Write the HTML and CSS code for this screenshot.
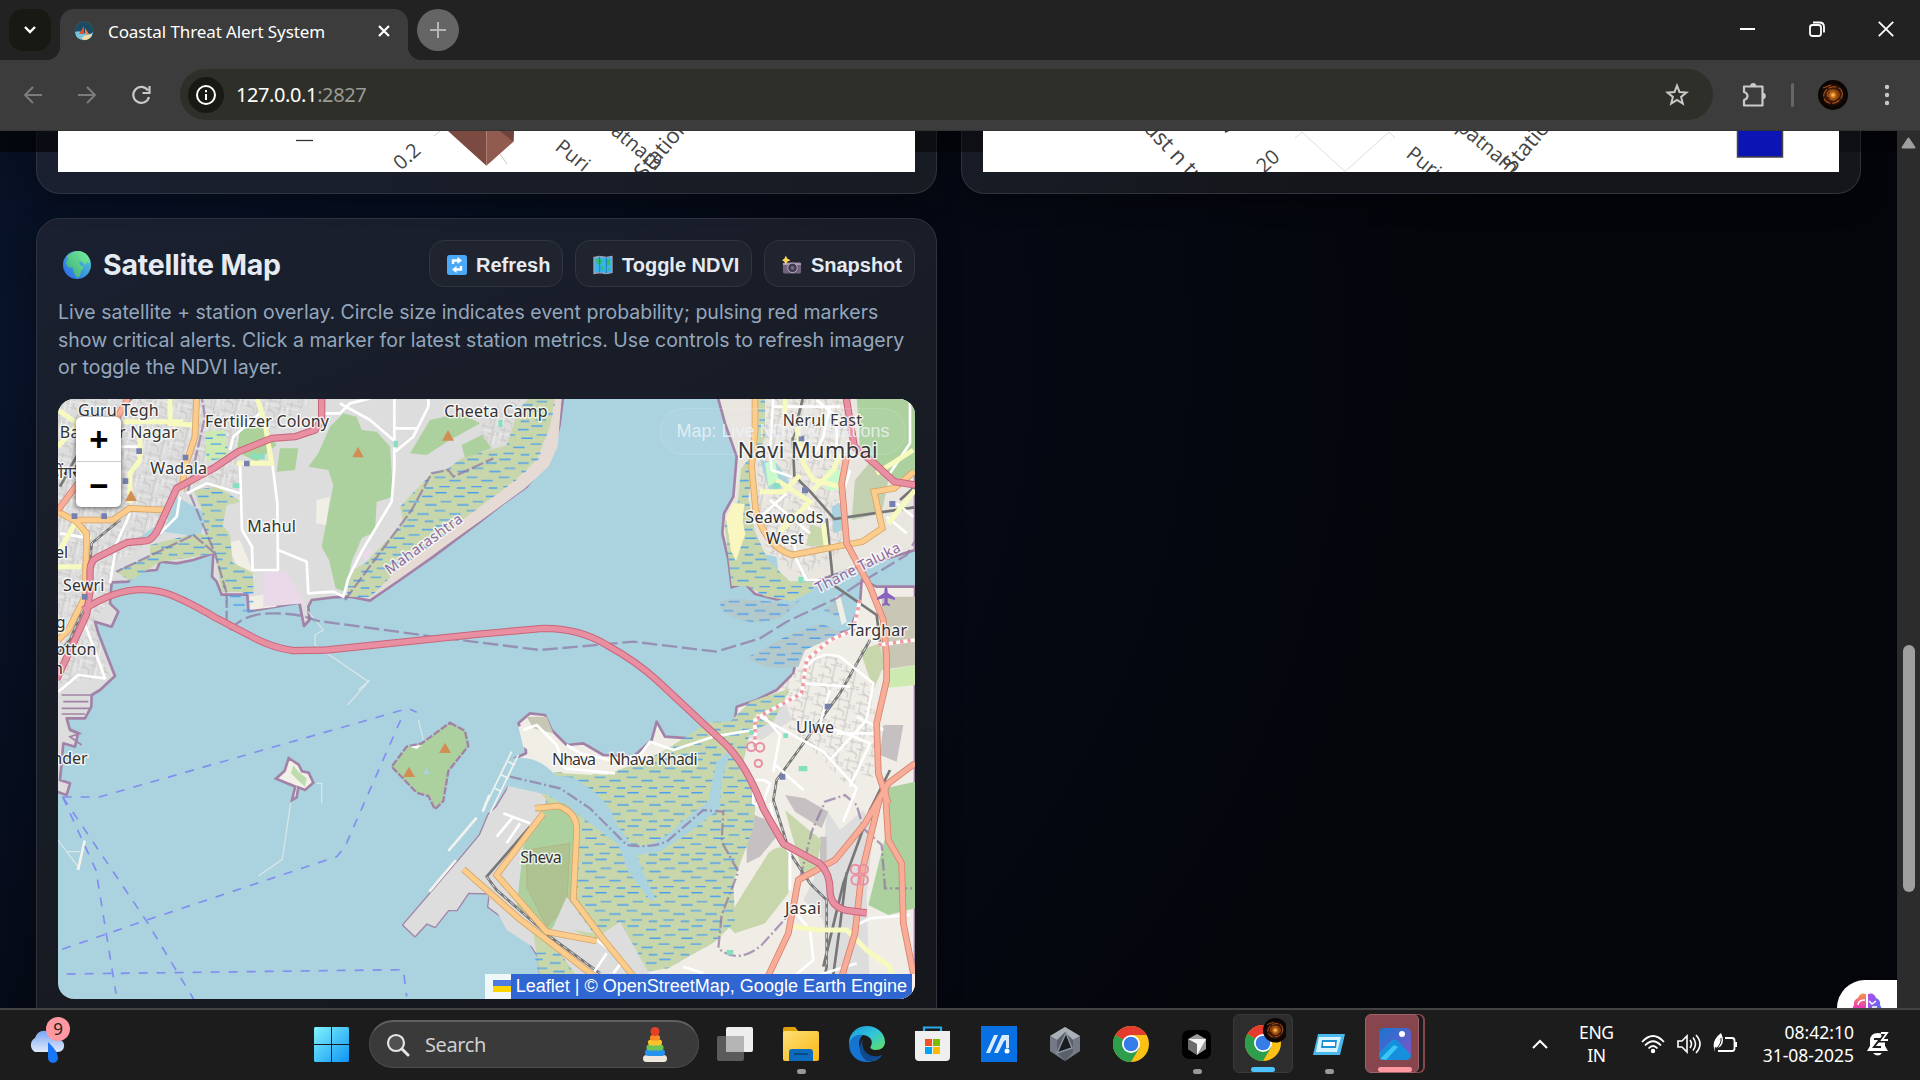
FILE: index.html
```html
<!DOCTYPE html>
<html lang="en">
<head>
<meta charset="utf-8">
<title>Coastal Threat Alert System</title>
<link rel="stylesheet" href="styles.css">
</head>
<body>
<div class="screen">
  <div class="tabstrip">
    <div class="tabsearch"><svg width="14" height="10" viewBox="0 0 14 10"><path d="M2 2l5 5 5-5" fill="none" stroke="#fff" stroke-width="2.4"/></svg></div>
    <div class="tab">
      <svg class="favicon" width="20" height="20" viewBox="0 0 20 20"><circle cx="10" cy="10" r="9.2" fill="#1c4a63" stroke="#2b5a66"/><path d="M1 11q4-2 9 1t9-1q-1 8-9 8t-9-8" fill="#79c3da"/><path d="M8 18q0-3 5-4l5-1q-2 6-8 6z" fill="#f3d9a6"/><path d="M10 5v8H5z" fill="#e3502b"/><path d="M11 7l4 6h-4z" fill="#f08040"/></svg>
      <span class="tab-title">Coastal Threat Alert System</span>
      <svg width="14" height="14" viewBox="0 0 14 14"><path d="M2 2l10 10M12 2L2 12" stroke="#fff" stroke-width="2.2"/></svg>
    </div>
    <div class="newtab"><svg width="16" height="16" viewBox="0 0 16 16"><path d="M8 0v16M0 8h16" stroke="#b5b5b5" stroke-width="2"/></svg></div>
    <div class="winctl">
      <svg width="16" height="16" viewBox="0 0 16 16"><path d="M0 8h15" stroke="#fff" stroke-width="2"/></svg>
      <svg width="16" height="16" viewBox="0 0 16 16"><rect x="1" y="4" width="11" height="11" rx="2.5" fill="none" stroke="#fff" stroke-width="1.8"/><path d="M4 1.5h6.500q4.500 0 4.500 4.500v5.500" fill="none" stroke="#fff" stroke-width="1.800"/></svg>
      <svg width="16" height="16" viewBox="0 0 16 16"><path d="M.8.8l14.400 14.400M15.200.8L.8 15.200" stroke="#fff" stroke-width="1.800"/></svg>
    </div>
  </div>

  <div class="toolbar">
    <div class="nav">
      <svg width="20" height="20" viewBox="0 0 20 20"><path d="M19 10H2M10 2L2 10l8 8" fill="none" stroke="#7b7b7b" stroke-width="2"/></svg>
      <svg width="20" height="20" viewBox="0 0 20 20"><path d="M1 10h17M10 2l8 8-8 8" fill="none" stroke="#7b7b7b" stroke-width="2"/></svg>
      <svg width="20" height="20" viewBox="0 0 20 20"><path d="M17 5.500A8 8 0 1 0 18 12" fill="none" stroke="#c9c9c9" stroke-width="2.200"/><path d="M18.500 1v7h-7" fill="none" stroke="#c9c9c9" stroke-width="2.200"/></svg>
    </div>
    <div class="omnibox">
      <span class="siteinfo"><svg width="22" height="22" viewBox="0 0 22 22"><circle cx="11" cy="11" r="9" fill="none" stroke="#fff" stroke-width="2"/><path d="M11 10v6M11 6v2.200" stroke="#fff" stroke-width="2"/></svg></span>
      <span class="url">127.0.0.1<i>:2827</i></span>
      <svg width="24" height="24" viewBox="0 0 24 24"><path d="M12 2.600l2.500 6.400 6.900.5-5.300 4.400 1.700 6.700-5.800-3.700-5.800 3.700 1.700-6.700L2.600 9.500 9.500 9z" fill="none" stroke="#c9c9c9" stroke-width="2"/></svg>
    </div>
    <svg class="ext" width="26" height="26" viewBox="0 0 26 26"><path d="M3 4.500h18.500v19H3v-5.500q3.500-1 3.500-4T3 10z" fill="none" stroke="#c9c9c9" stroke-width="2.200" stroke-linejoin="round"/><path d="M9 4.500a3.200 3.500 0 0 1 6.400 0zM21.500 10.800a3.300 3.200 0 0 1 0 6.400z" fill="#c9c9c9"/></svg>
    <span class="sep"></span>
    <svg class="avatar" width="30" height="30" viewBox="0 0 30 30"><use href="#galaxy"/></svg>
    <svg width="6" height="24" viewBox="0 0 6 24"><g fill="#c9c9c9"><circle cx="3" cy="4" r="2.200"/><circle cx="3" cy="12" r="2.200"/><circle cx="3" cy="20" r="2.200"/></g></svg>
  </div>

  <div class="viewport">
    <div class="page">
      <div class="charts">
        <section class="card chart-card">
          <svg class="chart" viewBox="58 131 857 41" width="857" height="41">
            <rect x="58" y="131" width="857" height="41" fill="#fff"/>
            <path d="M296 140.500h17" stroke="#333" stroke-width="1.300"/>
            <path d="M434 136l6-5M498 151l9 13" stroke="#ccc"/>
            <path d="M448 131l38.400 34.700V131z" fill="#7b4b42"/><path d="M486.400 165.700l27-24L514 131h-27.600z" fill="#925b50"/><path d="M500 131h14l-.6 10.700z" fill="#6d433b"/>
            <g class="plot-label"><text transform="translate(401 171) rotate(-42)">0.2</text><text transform="translate(554 149) rotate(39)">Puri</text><text transform="translate(610 133) rotate(40)">atnam</text><text class="axis" transform="translate(644 181) rotate(-50)">Station</text></g>
          </svg>
        </section>
        <section class="card chart-card">
          <svg class="chart" viewBox="983 131 856 41" width="856" height="41">
            <rect x="983" y="131" width="857" height="41" fill="#fff"/>
            <path d="M1295 138l7-6 43 39.500 44-39.500 6 6" fill="none" stroke="#ddd"/>
            <path d="M1225 132l4-2" stroke="#444" stroke-width="2"/>
            <g class="plot-label"><text class="axis" transform="translate(1139 125) rotate(47)">Just n tr</text><text transform="translate(1264 174) rotate(-42)">20</text><text transform="translate(1405 156) rotate(39)">Puri</text><text transform="translate(1456 129) rotate(40)">patnam</text><text class="axis" transform="translate(1513 173) rotate(-50)">Station</text></g>
            <rect x="1737.500" y="120" width="45" height="37" fill="#0c14b4" stroke="#444" stroke-width="1.500"/>
          </svg>
        </section>
      </div>

      <section class="card map-card">
        <div class="card-head">
          <h2><svg width="28" height="28" viewBox="0 0 28 28"><circle cx="14" cy="14" r="14" fill="url(#sea)"/><path d="M4 6q5-6 12-6 7 1 10 7l1 6-3-2-2 3-3-3-3-1 1 4 4 2-3 4-1 5-3 2-3-5-1-5-5-1-2-4 2-4z" fill="url(#land)"/></svg>Satellite Map</h2>
          <div class="actions">
            <button><svg width="20" height="20" viewBox="0 0 20 20"><rect width="20" height="20" rx="2.500" fill="#4ba8f7"/><path d="M6 9V5.500h5M14 11v3.500H9" fill="none" stroke="#fff" stroke-width="2.400"/><path d="M10.500 2l4.500 3.500-4.500 3.500zM9.500 11L5 14.500 9.500 18z" fill="#fff"/></svg><span>Refresh</span></button>
            <button><svg width="20" height="20" viewBox="0 0 21 20"><path d="M1 2l6-1 7 1 6-1v17l-6 1-7-1-6 1z" fill="#38b5e8" stroke="#aaa2bd" stroke-width="1.200"/><path d="M3 4l4-1 3 3-2 3-3 1zM8 11l3 1-2 5zM13 5l5-1v5l-3 2zM15 13l3 1-1 2z" fill="#35bc62"/><path d="M7 1v17M14 2v17" stroke="#197eb8"/></svg><span>Toggle NDVI</span></button>
            <button><svg width="20" height="20" viewBox="0 0 21 20"><rect x="1" y="7" width="19" height="12" rx="2" fill="#72637e"/><path d="M1 9h19" stroke="#aa9db3" stroke-width="2"/><circle cx="11" cy="13" r="5" fill="#43394d" stroke="#bdafc4"/><circle cx="11" cy="13" r="2" fill="#756d8d"/><path d="M4 0l1.400 3.200L9 5 5.400 6.500 4 10 2.600 6.500 0 5l2.600-1.800z" fill="#ffd55c"/></svg><span>Snapshot</span></button>
          </div>
        </div>
        <p class="desc">Live satellite + station overlay. Circle size indicates event probability; pulsing red markers show critical alerts. Click a marker for latest station metrics. Use controls to refresh imagery or toggle the NDVI layer.</p>
        <div class="map">
          <svg class="tiles" viewBox="24 27 2571 1800" width="857" height="600">
            <defs>
              <pattern id="wet" width="96" height="100" patternUnits="userSpaceOnUse"><path d="M4 8h34M60 19h32M20 35h32M70 45h26M0 45h8M2 62h32M46 72h34M16 90h32M68 94h26" stroke="#4b9ff0" stroke-width="4"/></pattern>
              <pattern id="streets" width="64" height="58" patternUnits="userSpaceOnUse" patternTransform="rotate(12)"><path d="M0 9h40l8 12h16M14 0v34l20 10v14M44 0v58M0 40h26M30 28h34" fill="none" stroke="#c9c7c5" stroke-width="3"/><path d="M0 20h44M54 20v38M5 20v30" stroke="#efeeed" stroke-width="3" fill="none"/></pattern>
            </defs>
            <rect width="2700" height="1900" fill="#abd3df"/>
            <!-- land -->
            <g stroke="#a283a7" stroke-width="8" stroke-linejoin="round" fill="#dddddd">
              <path d="M0 0H1542L1528 110 1505 180 1470 240 1430 290 1360 340 1290 395 1150 500 1050 570 960 632 900 620 850 622 785 630 775 650 778 690 762 708 748 638 595 664 592 614 515 614 500 575 486 560 490 490 430 510 380 520 330 515 320 540 260 545 235 575 185 577 180 640 205 665 185 710 135 695 145 730 195 858 150 900 125 915 124 950 105 985 50 985 60 1020 84 1030 75 1070 40 1060 30 1170 60 1180 50 1215 20 1205H0z"/>
              <path d="M2003 20L2025 100 2060 200 2050 320 2022 370 2017 430 2035 510 2045 592 2085 580 2115 612 2180 628 2240 615 2280 580 2380 545 2595 480V20z" fill="#e9e6e0"/>
              <path d="M2595 590L2480 590 2435 570 2430 640 2400 720 2330 740 2285 755 2240 800 2230 850 2180 900 2120 930 2060 950 2055 990 2000 1030 1920 1045 1845 1040 1820 995 1805 1050 1750 1100 1660 1095 1600 1060 1550 1065 1505 1020 1485 975 1440 970 1405 1000 1425 1045 1428 1090 1385 1110 1395 1160 1340 1250 1315 1275 1290 1335 1240 1395 1060 1605 1095 1638 1130 1600 1155 1610 1195 1560 1220 1560 1255 1508 1320 1510 1315 1550 1420 1628 1465 1700 1480 1827H2595z" fill="#f0ede6"/>
            </g>
            <!-- Mumbai side -->
            <path d="M0 20H800L560 200 570 320 440 280 400 320 330 440 190 520 180 570 170 640 130 700 180 860 30 880z" fill="url(#streets)"/>
            <path d="M1300 60l110-30-40 130-80 20z" fill="url(#streets)"/>
            <path d="M570 120l60-15 50 60-60 50-60-30zM690 175h55l-10 65-55 5z" fill="#acd19b"/>
            <path d="M465 125l60-5 10 80-65 15z" fill="#cdebb0"/>
            <path d="M840 110l40-40 40 10 15 40 45 5 40 45 10 150-50 15-5 90-40 20-30 70-20 90-28-10-20-85-22-40 35-185-15-45-60-10 30-40z" fill="#acd19f"/>
            <path d="M1080 190l60-100 90-20 60 30-90 50-70 45zM1235 165l60-30 30 40-80 30z" fill="#acd19f"/>
            <path d="M800 330l40-10-12 85-30-5zM530 460l40-10 45 110-30 20zM600 620l60-10 20 40-80 10z" fill="#f1eee6"/>
            <path d="M640 545h70l55 95-125 10zM930 490l40-20-20 45z" fill="#ead9e8"/>
            <path d="M380 320l90 50-20 70-110-15zM270 440l60-40-40 60z" fill="#abd3df"/>
            <path d="M890 620L900 545 945 520 1060 400 1050 350 1145 250 1195 235 1235 205 1370 165 1405 60 1440 20H1520L1500 110 1465 210 1400 270 1290 350 1200 425 1050 535 960 622z" fill="#c8d7ab"/>
            <path d="M1535 20h-20l-15 90-40 100-70 65-100 75-240 180-85 90 90-60 240-170 130-95 70-65 28-60z" fill="#e5dad4"/>
            <path d="M430 300l70-10 75 45-45 10-12 60 22 28 8 85 62 30v58h-95l-20-116-60 10-105 15-90 58-45-30 105-45v-33l140-35 30 5-15-75z" fill="#c8d7ab"/>
            <g fill="url(#wet)"><path d="M890 620L900 545 945 520 1060 400 1050 350 1145 250 1195 235 1235 205 1370 165 1405 60 1440 20H1520L1500 110 1465 210 1400 270 1290 350 1200 425 1050 535 960 622z"/><path d="M430 300l70-10 75 45-45 10-12 60 22 28 8 85 62 30v118h-75l-40-176-60 10-105 15-90 58-45-30 105-45v-33l140-35 30 5-15-75zM465 125l60-5 10 80-65 15z"/></g>
            <!-- Navi Mumbai -->
            <path d="M2120 27H2400L2390 210 2360 340 2380 480 2250 560 2150 480 2125 370z" fill="url(#streets)"/>
            <path d="M2420 20h180v230l-70 20-100-90z" fill="#acd19f"/><path d="M2415 270l50-60 50 60-20 100-90 20z" fill="#c3d0b0"/>
            <path d="M2130 210l50 10 40 60-60 30zM2130 490l50 10 10 100-40-20zM2345 350l35-20v90l-30 10z" fill="#abd3df"/><path d="M2145 220l30-10 10 60-30 20zM2330 240h45v60h-50z" fill="#c8facc"/>
            <g fill="#c8d7ab"><path d="M2008 27h105l-10 170-30 40-10 100-40 60 22 190 50 2 50 30 80 15 60-30 15-30-80 0-65-60-40-90-20-100 20-120 30-60V27z"/><path d="M2280 405l40 10 10 60-60-10z"/></g>
            <path d="M2008 27h105l-10 170-30 40-10 100-40 60 22 190 50 2 50 30 80 15 60-30 15-30-80 0-65-60-40-90-20-100 20-120 30-60V27z" fill="url(#wet)"/>
            <path d="M2028 385l20-45 35 2-5 50 8 40-28 80-15-30z" fill="#f9f6c0"/>
            <path d="M2010 640q10-20 85-10 60 0 130 15l30-20-60 60q-80 20-120 5-60-15-65-50zM2095 800l130-70 90-30 60 30-110 50-20 50q-110 15-150-30zM2320 660l40-30 20 60z" fill="#b4c9cc"/><path d="M2010 640q10-20 85-10 60 0 130 15l30-20-60 60q-80 20-120 5-60-15-65-50zM2095 800l130-70 90-30 60 30-110 50-20 50q-110 15-150-30zM2320 660l40-30 20 60z" fill="url(#wet)"/>
            <!-- Ulwe and Jasai -->
            <path d="M2260 820l60-50 130 100 30 110-10 180-80 30-60-70-140-130-40-50z" fill="url(#streets)"/>
            <path d="M2495 620h100v205l-100 15z" fill="#c8c6b4"/><path d="M2515 840l80-15v60l-90 10z" fill="#cdebb0"/><path d="M2430 780l60-20 10 70-30 70z" fill="#c8d7ab"/>
            <path d="M2355 620l15-5 20 80-15 10z" fill="#f1eee6"/>
            <path d="M2330 1260l40 60 70-60 30 60-20 200 10 300h-120l-20-230-60-60 60-120zM2085 970l120-40 20 60-90 60-50-10z" fill="#dddddd"/>
            <path d="M2500 1005h60l-20 110-50-20zM2205 1215l60 10 70 40-20 50-80-50zM2090 1265l60 25 30 50-50 60-40 20zM2310 1340h20v90h-20z" fill="#c5c1c2"/>
            <path d="M2505 1195l90-20v380l-80 20-60-30 50-200z" fill="#acd19f"/>
            <path d="M2205 1260l60 50 50 40-20 110-40-20zM2155 1390q30-30 60-10v130l-70 90-90 30-30-30 60-100z" fill="#c8d7ab"/>
            <path d="M1395 1160L1340 1250 1315 1275 1290 1335 1240 1395 1060 1605 1095 1638 1130 1600 1155 1610 1195 1560 1220 1560 1255 1508 1320 1510 1315 1550 1420 1628 1465 1700 1650 1700 1640 1500 1560 1300 1500 1180z" fill="#dddddd"/>
            <path d="M1390 1120l110 60 20 90-100 160v130l90 70 160 120-40 40-260-170-70-130 30-120z" fill="#dddddd"/>
            <path d="M1500 1220l120 30 120 100 60-70-10 80-50 60 60 70-70 20-60-60-90-120-100-60z" fill="#abd3df"/>
            <path d="M1540 1145l130 10 160-65 150-95 60 0 60-60 120-40-50 100-70 30-20 90 40 80-10 120-60 160 5 120-60 60-140 80-190 30-80-60-70-100-30-100 20-200-20-80-50-70z" fill="#c8d7ab"/><path d="M1540 1145l130 10 160-65 150-95 60 0 60-60 120-40-50 100-70 30-20 90 40 80-10 120-60 160 5 120-60 60-140 80-190 30-80-60-70-100-30-100 20-200-20-80-50-70z" fill="url(#wet)"/>
            <path d="M1450 1630l110 0 180 197h-260z" fill="#c8d7ab"/><path d="M1450 1680l110 0 180 147h-260z" fill="url(#wet)"/><path d="M1430 1550l200 100 80-55 130 232h-210z" fill="#ddd"/>
            <path d="M1385 1105q80-10 130 50l60 10q110 70 120 130l50 70q70 15 150-70l80-60q10-60 25-120l60-50q-50 60-50 190l-90 70-90 60-70 10 20 50 35 80-10 10-70-90-30-80-90-70-120-80-180-40z" fill="#abd3df"/>
            <path d="M1485 1240h60l30 60-15 260-60 60-100-70 20-180z" fill="#acd19f"/><path d="M1430 1380l130-20-10 190-60 60-60-120z" fill="#aec292" stroke="#b6ae7c" stroke-width="2"/><path d="M1550 1520l80 110-120-20z" fill="#ddd"/>
            <path d="M1405 1010l60-20 75 80 60 60 60 5-35 20-85-5-120-80z" fill="#f1eee6"/><path d="M1430 980l60 0 20 50-60-15z" fill="#c8c6b4"/>
            <!-- islands -->
            <path d="M1200 998l45 25 10 45-60 75-15 90-25 25-20-40-35-10-75-78 45-60 45-10z" fill="#acd19f" stroke="#a283a7" stroke-width="7" stroke-dasharray="22 5"/>
            <path d="M1080 1070l35-5-15 12z" fill="#fff"/>
            <path d="M716 1104l30 20 10 20 20 4 14 30-25 22-20-8-5 30-14 8 10-40-58-24 26-24z" fill="#f3f0e9" stroke="#a283a7" stroke-width="8"/><path d="M730 1125l15 20 25 20-5 25-22-20-20-20z" fill="#bddcae"/>
            <g fill="none" stroke="#a283a7" stroke-width="5"><path d="M35 915h90M40 935h75M35 955h85M35 972h70M55 1015l35 15-30 10 35 25"/></g>
            <!-- piers and ferries -->
            <g fill="none" stroke="#dbe6e6" stroke-width="3.500"><path d="M775 665l45 55-25 15v30l160 110-62 70M960 870l-35 30M722 1238l-25 170-72 50M24 1350l60 80M50 1385h40M1105 990l15 60M800 1180h15v60"/><path d="M104 1352l-20 88M1280 1283l-85 100M1218 1410l-80 95M1318 1215l-20 50" stroke="#f2f2ef" stroke-width="8"/><path d="M1385 1085l-85 175M1405 1095l-85 175M1375 1115l20 10M1355 1155l20 10M1335 1195l20 10" stroke="#f2f2ef" stroke-width="5"/></g>
            <g fill="none" stroke="#828df0" stroke-width="5" stroke-dasharray="27 27"><path d="M38 1221h110L1075 955l25 12"/><path d="M1052 990L885 1370 860 1400 285 1592 30 1680"/><path d="M38 1221l100 220 60 370M38 1221l250 370 145 240M50 1752l1010-13 10 80"/></g>
            <g fill="none" stroke="#8d71a0" stroke-width="7" opacity=".68"><path d="M540 720q40-50 130-50 80 0 130 22l350 48 320 40 280-25 250 30 130-40 80-50 150-70 60-40 150-90 30-50" stroke-dasharray="46 14"/><path d="M530 700V610l-35-120-80-190 50-220-10-60M495 490l-65-55-230 110M885 630l200-270 60-110 50-10 15 20 120-55" stroke-dasharray="38 8"/><path d="M1380 1160l150 35 90 60 110 110q70 10 120-10l110-95 60 5-5 90 50 90-50 130-10 100q60 50 130-10l90-100 60-240 40-90 60-20 35 30 20 70 55 50 10 130h110" stroke-dasharray="36 9 6 9"/></g>
            <!-- railways -->
            <g fill="none" stroke="#777" stroke-width="8"><path d="M250 20L90 180 30 290M210 390l-85 70-15 170-50 120-36 40M2258 27l-30 120 5 110 50 50 70 80 240-35M2550 330l50-45M2330 385l20 200 130 90 10 80M2460 750l-90 160-190 260-10 60 50 160 60 90 50 50v200l-20 100M2520 1140l-60 120-80 220-60 250M1440 1310L1310 1460l30 40 160 140 150 110M2340 1827l30-220 20-160"/></g>
            <g fill="none" stroke="#ddd" stroke-width="3" stroke-dasharray="14 12"><path d="M210 390l-85 70-15 170-50 120M2460 750l-90 160-190 260-10 60 50 160 60 90 50 50v200M1310 1460l30 40 160 140 150 110"/></g>
            <!-- local streets -->
            <g fill="none" stroke="#fff" stroke-width="8" stroke-linejoin="round"><path d="M570 220l6 200 30 50 2 70h76l-2-200-15-120M685 480l85 35 5 95 75-5 30 15 15-55 40-80 90-150 8-100V27M1030 190l60-50 45-90V27M1030 115h75M810 70l60 0 30-30 60-15M870 40l90 50 70 60M410 310l60-30 100 30M390 320l-10 60-50 50M240 370l-40 90-20 120M100 690l65 175-80-10-60 50M540 180l10-40 80-70M30 430l90 15M190 170h75v30"/><path d="M2170 20l-10 160 5 60 60 20M2170 50h200M2300 30l60 50 0 110M2290 200l30-60 20-90M2160 330l120 100M2210 310l-100 90M2230 440l10 70 30 60h40M2260 340l60 50M2400 240l-30 100M2510 380l60 50M2540 340l50 40M2520 250l60-90V20"/><path d="M2270 830q40-50 100-30l100 80-20 110-110 120M2260 880l140 10M2340 900l-30 100 150 60-60 130M2140 975l50 60-20 110M2120 975l200 110 100 110-40 100M2170 1120l90 80M2420 980l80 40M2360 1030h120M1550 1065l40 25 90 20 90-15 30-40 70 25 120-40 120-20M1420 1020l40-15 60 60 25 70 150 15M2140 1170h-30v70l25 10 25-70zM2160 1240l20 90 40 60 0 110M1360 1270l80 30M1340 1340l50-60M1370 1360l40-60M1500 1660l130 90 40-60M1640 1650l80 60-30 40M2230 1560l50 60 10 90-60 50M2290 1760l130-40M2410 1610l50-25 120-10M1900 1730l60 20"/></g>
            <g fill="none" stroke="#f7fabf" stroke-width="15"><path d="M24 60l90 60M360 20v80l70 5M220 95h180M270 110v100l-30 40v90M620 20l25 80 20 120H560M24 530h70M25 490l50-90 45 50M24 170l70-80"/><path d="M2205 27v60M2240 110l20 110 30 50 80 20M2130 305h70l50-50M2180 270l100 65-90 90M2290 300l60-60 20-50M2320 400l10 80M2480 250l110-70M2595 300l-80 100"/><path d="M2220 1608l80 12h90l60 60 70 50 20 90"/></g>
            <g fill="none" stroke="#d7a568" stroke-width="20"><path d="M440 20l-5 120-30 90-10 70M24 365l45 25h120l50-35 100 5M75 390l35 40-5 190-50 100-31 30M2115 20v100l-10 110 12 130q30 110 110 135l210-40 60-40-25-110 60-10 60-50M1455 1255l70-7q60 20 55 80l-10 200 90 120 90 110M1480 1270L1340 1455l150 170 150 28M1240 1438l170 150 340 260"/></g><g fill="none" stroke="#fbcc8b" stroke-width="15"><path d="M440 20l-5 120-30 90-10 70M24 365l45 25h120l50-35 100 5M75 390l35 40-5 190-50 100-31 30M2115 20v100l-10 110 12 130q30 110 110 135l210-40 60-40-25-110 60-10 60-50M1455 1255l70-7q60 20 55 80l-10 200 90 120 90 110M1480 1270L1340 1455l150 170 150 28M1240 1438l170 150 340 260"/></g>
            <g fill="none" stroke="#d9826e" stroke-width="20"><path d="M2390 200l-15 80 15 180 70 130 40 100 10 110V870l-30 130 5 150 30 90M2595 1120l-80 60-70 120-90 110-110 60-30 160-90 190M24 360l90-120 120-215M2505 1190l10 160 40 70 5 180 40 200M2490 1220l-55 230-20 180-60 197"/></g><g fill="none" stroke="#f7ad98" stroke-width="15"><path d="M2390 200l-15 80 15 180 70 130 40 100 10 110V870l-30 130 5 150 30 90M2595 1120l-80 60-70 120-90 110-110 60-30 160-90 190M24 360l90-120 120-215M2505 1190l10 160 40 70 5 180 40 200M2490 1220l-55 230-20 180-60 197"/></g>
            <g fill="none" stroke="#fff" stroke-width="11"><path d="M2430 630l-20 90-70 30-70 60-15 100-110 60-30 20v80M2485 765l110-15"/></g>
            <g fill="none" stroke="#f19aa3" stroke-width="11" stroke-dasharray="10 12"><path d="M2430 630l-20 90-70 30-70 60-15 100-110 60-30 20v80M2485 765l110-15"/></g>
            <g fill="none" stroke="#c8657c" stroke-width="22" stroke-linejoin="round"><path id="trunk" d="M815 20v70l-20 30-60 20-70 5-100 40-75 50-110 60-50 110q-20 50-50 48l-50 5-90 45q-20 10-20 40v60l-10 70-90 195M100 660q120-80 230-55 50 10 170 80l100 52q60 35 130 45l100-2 450-47 200-18q110 0 190 50 90 50 150 105l210 196q60 60 110 190l60 105 110 60q30 30 30 80 0 50 50 60l60 8M2388 20l25 150 60 50 60 55 62 10"/></g><g fill="none" stroke="#e88fa1" stroke-width="16" stroke-linejoin="round"><use href="#trunk"/></g>
            <g fill="none" stroke="#e88fa1" stroke-width="6"><circle cx="2104" cy="1070" r="13"/><circle cx="2130" cy="1072" r="13"/><circle cx="2125" cy="1120" r="11"/><circle cx="2416" cy="1438" r="14"/><circle cx="2440" cy="1438" r="14"/><circle cx="2418" cy="1470" r="14"/><circle cx="2440" cy="1470" r="14"/></g>
            <g fill="#7580b0"><path d="M259 175h17v17h-17zM398 194h17v17h-17zM218 265h17v17h-17zM582 212h17v17h-17zM65 370h17v17H65zM154 370h17v17h-17zM96 612h17v17H96zM2246 137h17v17h-17zM2256 292h18v18h-18zM2518 333h18v18h-18zM2324 941h17v17h-17zM2189 1152h17v17h-17z"/></g>
            <g fill="#d18d52"><path d="M924 170l17 32h-34zM1194 120l18 32h-36zM243 301l18 32h-36zM1185 1058l18 31h-36zM1077 1130l18 31h-36z"/></g>
            <path d="M1130 1130l9 22h-18z" fill="#abd3df"/>
            <g fill="#86e0c0"><path d="M602 190h18v16h-18zM624 192h20v16h-20zM1030 152h14v20h-14zM1345 90h12v22h-12zM2170 280h20v16h-20zM2245 560h15v18h-15zM2200 1030h14v14h-14zM2246 1128h26v16h-26zM548 280h20v14h-20zM2030 1680h20v14h-20zM2098 1020h14v14h-14z"/></g>
            <path d="M2508 590q5 0 5 18l22 15v7l-22-6v14l7 6v4l-12-3-12 3v-4l7-6v-14l-22 6v-7l22-15q0-18 5-18z" fill="#8a63bf"/>
            <g class="place">
              <text x="205" y="79" textLength="242">Guru Tegh</text><text x="206" y="145" textLength="353">Bahadur Nagar</text><text x="651" y="112" textLength="372">Fertilizer Colony</text><text x="386" y="251" textLength="170">Wadala</text><text x="665" y="425" textLength="146">Mahul</text><text x="101" y="603" textLength="124">Sewri</text><text x="50" y="265">डोंगरी</text><text x="35" y="505">el</text><text x="32" y="715">g</text><text x="78" y="794">otton</text><text x="24" y="853">n</text><text x="60" y="1121">nder</text>
              <text x="1338" y="81" textLength="310">Cheeta Camp</text><text x="2317" y="107" textLength="238">Nerul East</text><text class="city" x="2273" y="203" textLength="420">Navi Mumbai</text><text x="2203" y="398" textLength="234">Seawoods</text><text x="2204" y="461" textLength="114">West</text><text x="2482" y="737" textLength="178">Targhar</text><text x="2295" y="1028" textLength="114">Ulwe</text><text x="1572" y="1124" textLength="132">Nhava</text><text x="1810" y="1124" textLength="266">Nhava Khadi</text><text x="1473" y="1420" textLength="124">Sheva</text><text x="2259" y="1573" textLength="108">Jasai</text>
              <text class="region" transform="translate(1130 474) rotate(-36)" textLength="275">Maharashtra</text><text class="region" transform="translate(2430 546) rotate(-27)" textLength="280">Thane Taluka</text>
            </g>
          </svg>
          <div class="zoomctl"><span>+</span><span>−</span></div>
          <div class="map-pill">Map: Live NDVI &amp; Stations</div>
          <div class="attrib"><svg width="18" height="12" viewBox="0 0 18 12"><path d="M0 0h18v6H0z" fill="#4c7be1"/><path d="M0 6h18v6H0z" fill="#ffd500"/></svg><span>Leaflet | © OpenStreetMap, Google Earth Engine</span></div>
        </div>
      </section>
      <div class="topshade"></div>
      <div class="assistant"><svg width="30" height="30" viewBox="0 0 30 30"><path d="M14 1q-6-2-8 4-5 2-4 7-4 6 2 11 5 6 10 3z" fill="url(#brainL)"/><path d="M16 1q6-2 8 4 5 2 4 7 4 6-2 11-5 6-10 3z" fill="url(#brainR)"/><path d="M6 12q0-5 7-5M17 8l3 3 4-3M25 14h-4v4" fill="none" stroke="#fff" stroke-width="1.500"/></svg></div>
    </div>
    <div class="scrollbar"><svg width="15" height="12" viewBox="0 0 15 12"><path d="M7.500 1.500L13.500 10.500h-12z" fill="#9f9f9f" stroke="#9f9f9f" stroke-width="2" stroke-linejoin="round"/></svg><span class="thumb"></span></div>
  </div>

  <div class="taskbar">
    <div class="weather"><svg width="38" height="34" viewBox="0 0 38 34"><path d="M7 22a8 8 0 0 1 0-14Q10-1 19 1q8 0 11 8 7 2 6 8-1 5-7 5z" fill="url(#cloud)"/><path d="M20 12q10 9 10 16a5 5 0 0 1-10 0z" fill="#1976f5"/></svg><b>9</b></div>
    <svg class="start" width="35" height="35" viewBox="0 0 35 35"><path d="M1 0h16v17H0V1zM18 0h16l1 1v16H18zM0 18h17v17H1l-1-1zM18 18h17v16l-1 1H18z" fill="url(#win)"/></svg>
    <div class="search"><svg width="24" height="24" viewBox="0 0 24 24"><circle cx="10" cy="10" r="8" fill="#505050" stroke="#e5e5e5" stroke-width="2.200"/><path d="M16 16l6 6" stroke="#e5e5e5" stroke-width="3" stroke-linecap="round"/></svg><span>Search</span>
      <svg width="26" height="36" viewBox="0 0 26 36"><rect x="1" y="28" width="24" height="7" rx="3.500" fill="#eee9dc"/><rect x="3" y="22" width="20" height="7" rx="3.500" fill="#2693ee"/><rect x="4.500" y="17.500" width="17" height="6" rx="3" fill="#6dc457"/><rect x="6" y="12.500" width="14" height="6" rx="3" fill="#ffc22c"/><rect x="8" y="8" width="10" height="5.500" rx="2.700" fill="#ff8a25"/><circle cx="13" cy="4.500" r="4.500" fill="#e64027"/></svg></div>
    <div class="apps">
      <div class="app"><svg width="36" height="36" viewBox="0 0 36 36"><rect x="9" y="1" width="27" height="25" rx="2" fill="#eee"/><rect x="0" y="10" width="27" height="25" rx="2" fill="#666" opacity=".85"/><path d="M9 10h18v16H9z" fill="#b5b5b5"/></svg></div>
      <div class="app run"><svg width="36" height="36" viewBox="0 0 36 36"><path d="M0 3q0-2 2-2h10l4 5v8H0z" fill="#e0a008"/><rect y="5" width="36" height="30" rx="2" fill="url(#folder)"/><path d="M6 35V26q0-3 3-3h18q3 0 3 3v9z" fill="#0d6bbd"/><path d="M11 28h14" stroke="#084a86" stroke-width="2"/></svg></div>
      <div class="app"><svg width="36" height="36" viewBox="0 0 36 36"><path d="M0 20C-1 7 8 0 18 0c10 0 18 7 18 16 0 5-4 8-9 8-4 0-7-2-5-4 3-7-3-11-9-11-7 0-13 5-13 11z" fill="url(#edgeTop)"/><path d="M0 18C2 10 9 8 14 9c-5 4-5 12-1 17 5 6 14 7 20 3-3 5-9 7-15 7C8 36 0 29 0 18z" fill="#1574cf"/><path d="M14 13c-5 7-4 17 4 22 7 1 12-2 15-6-8 3-15 0-18-5-2-4-2-7-1-11z" fill="#104b91"/></svg></div>
      <div class="app"><svg width="36" height="36" viewBox="0 0 36 36"><path d="M9 8V1.500h17V8" fill="none" stroke="#29a9e8" stroke-width="2.200"/><path d="M0 5h35v26q0 4-4 4H4q-4 0-4-4z" fill="#efefef"/><path d="M10 13h7v7h-7z" fill="#f25022"/><path d="M18 13h7v7h-7z" fill="#7fba00"/><path d="M10 21h7v7h-7z" fill="#00a4ef"/><path d="M18 21h7v7h-7z" fill="#ffb900"/></svg></div>
      <div class="app"><svg width="36" height="36" viewBox="0 0 36 36"><path d="M0 0h36v36H0z" fill="#0770e3"/><path d="M5 27L13 9h4L9 27zM13 27L21 9h7v13h-3v-8l-2 1-6 12z" fill="#d8ebff"/><circle cx="26" cy="25" r="2.500" fill="#fff"/></svg></div>
      <div class="app"><svg width="36" height="36" viewBox="0 0 36 36"><path d="M18 1l15 9v15L18 35 3 25V10z" fill="#59606a"/><path d="M18 1l15 9-7 4-8-8-8 8-7-4z" fill="#aab0b8"/><path d="M3 10l7 4v12l8 9L3 25zM33 10l-7 4v12l-8 9 15-10z" fill="#737a85"/><path d="M19 7L10 27l15-5z" fill="#181b20" stroke="#8b929b" stroke-width="1.500"/></svg></div>
      <div class="app"><svg width="36" height="36" viewBox="0 0 36 36"><use href="#chrome"/></svg></div>
      <div class="app run"><svg width="36" height="36" viewBox="0 0 36 36"><rect x="3" y="4" width="29" height="29" rx="7" fill="#000"/><path d="M18 8l9 5v10l-9 6-9-6V13z" fill="#9a9a9a"/><path d="M9 13h18l-9 16v-11z" fill="#f5f5f5"/><path d="M9 13l9 5v11l-9-6z" fill="#6c6c6c"/></svg></div>
      <div class="app active"><svg width="46" height="46" viewBox="0 0 46 46"><g transform="translate(5 8)"><use href="#chrome"/></g><g transform="translate(23 1) scale(.82)"><use href="#galaxy"/></g></svg></div>
      <div class="app run"><svg width="36" height="36" viewBox="0 0 36 36"><path d="M7 8h27l-5 21H2z" fill="#4bb9ee"/><path d="M8 11h22l-4 15H5z" fill="#d6f4ff"/><path d="M11 14h15l-1 8H10z" fill="#1d91d3"/><path d="M12 16h12v4H12z" fill="#fff"/></svg></div>
      <div class="app photos"><svg width="34" height="34" viewBox="0 0 34 34"><rect x="1" y="1" width="32" height="32" rx="5" fill="url(#photo)"/><path d="M1 26l13-13q3-2 6 1l13 14q0 5-5 5H6q-5 0-5-5z" fill="#168fdc"/><path d="M2 32l14-14 4 2-12 13z" fill="#39c8f6"/><circle cx="24" cy="7" r="3" fill="#fff"/></svg></div>
    </div>
    <div class="tray">
      <svg width="16" height="10" viewBox="0 0 16 10"><path d="M1 9l7-7 7 7" fill="none" stroke="#fff" stroke-width="2"/></svg>
      <div class="lang">ENG<br>IN</div>
      <div class="status">
        <svg width="24" height="20" viewBox="0 0 24 20"><g fill="none" stroke="#fff" stroke-width="1.800"><path d="M1 8q11-12 22 0M4 11.500q8-8.500 16 0M7.500 14.500q4.500-5 9 0"/></g><circle cx="12" cy="17" r="2.200" fill="#fff"/></svg>
        <svg width="24" height="20" viewBox="0 0 24 20"><g fill="none" stroke="#fff" stroke-width="1.600"><path d="M1 7h4l5-5v16l-5-5H1zM13 6q3 4 0 8M16 3.500q5 6.500 0 13M19 1q8 9 0 18"/></g></svg>
        <svg width="24" height="22" viewBox="0 0 24 22"><path d="M12 5h7q2.500 0 2.500 2.500v8q0 2.500-2.500 2.500H5" fill="none" stroke="#fff" stroke-width="1.800"/><path d="M22 9h2v5h-2zM1 15Q-1 7 8 0q4 8 0 13-3 3-6 1L1 19z" fill="#fff"/><path d="M8 5q1 6-6 12" stroke="#1c1c1c" fill="none"/></svg>
      </div>
      <div class="clock">08:42:10<br>31-08-2025</div>
      <svg width="22" height="26" viewBox="0 0 22 26"><path d="M0 20l3-5V10q0-8 8-8 7 0 7 8v5l3 5zM6 22h9q-4 5-9 0z" fill="#fff"/><path d="M7 8h6l-6 8h7" fill="none" stroke="#1c1c1c" stroke-width="2"/><path d="M14 2h6l-5 7h6" fill="none" stroke="#1c1c1c" stroke-width="5"/><path d="M14 2h6l-5 7h6" fill="none" stroke="#fff" stroke-width="1.800"/></svg>
    </div>
  </div>
</div>

<svg class="defs" width="0" height="0">
  <defs>
    <linearGradient id="sea" x1="1" y1="0" x2="0" y2="1"><stop stop-color="#55d3cf"/><stop offset="1" stop-color="#2763e9"/></linearGradient>
    <linearGradient id="land" x1="1" y1="0" x2="0" y2="1"><stop stop-color="#7af0a0"/><stop offset="1" stop-color="#38a975"/></linearGradient>
    <linearGradient id="win" x1="0" y1="0" x2="1" y2="1"><stop stop-color="#82f4fb"/><stop offset="1" stop-color="#0c94f5"/></linearGradient>
    <linearGradient id="cloud" x1="0" y1="0" x2="0" y2="1"><stop stop-color="#78a4f3"/><stop offset="1" stop-color="#dfe9fb"/></linearGradient>
    <linearGradient id="folder" x1="0" y1="0" x2="1" y2="1"><stop stop-color="#ffdf77"/><stop offset="1" stop-color="#f7b813"/></linearGradient>
    <linearGradient id="edgeTop" x1="0" y1="0" x2="1" y2="1"><stop stop-color="#1797d9"/><stop offset=".5" stop-color="#32c5dc"/><stop offset="1" stop-color="#61e35a"/></linearGradient>
    <linearGradient id="photo" x1="0" y1="0" x2="1" y2="1"><stop stop-color="#1476d3"/><stop offset="1" stop-color="#8a51c4"/></linearGradient>
    <linearGradient id="brainL" x1="0" y1="0" x2="0" y2="1"><stop stop-color="#f59a3c"/><stop offset=".5" stop-color="#ea3fb5"/></linearGradient>
    <linearGradient id="brainR" x1="0" y1="0" x2="1" y2="1"><stop stop-color="#b34be5"/><stop offset="1" stop-color="#3d7bf5"/></linearGradient>
    <radialGradient id="glow"><stop stop-color="#ffda62"/><stop offset=".15" stop-color="#d77a1d"/><stop offset=".4" stop-color="#4a1e09"/><stop offset=".8" stop-color="#0b0504"/></radialGradient>
    <g id="galaxy"><circle cx="15" cy="15" r="15" fill="url(#glow)"/><g fill="none" stroke="#b0571a"><ellipse cx="15" cy="15" rx="9.500" ry="8" stroke-dasharray="8 2" transform="rotate(-25 15 15)"/><path d="M10 17q-3-6 4-7 8 0 7 6-4 6-9 3M5 8l8-3"/></g></g>
    <g id="chrome"><circle cx="18" cy="18" r="18" fill="#fbc116"/><path d="M18 18L2.400 9A18 18 0 0 1 33.600 9H18z" fill="#e33b2e"/><path d="M2.400 9A18 18 0 0 0 18 36l8-13.500L18 18z" fill="#2d9e4b"/><circle cx="18" cy="18" r="9" fill="#fff"/><circle cx="18" cy="18" r="7.300" fill="#357ce8"/></g>
  </defs>
</svg>
</body>
</html>
```

FILE: styles.css
```css
* { box-sizing: border-box; }
body { margin: 0; overflow: hidden; background: #05070d; }
svg { display: block; flex: none; }
.defs { position: absolute; }
.screen { width: 1920px; height: 1080px; display: flex; flex-direction: column; overflow: hidden; font-family: "Noto Sans", "Open Sans", sans-serif; color: #fff; }

.tabstrip { height: 60px; background: #222; display: flex; padding: 9px 10px 0 9px; }
.tabsearch { width: 42px; height: 42px; border-radius: 14px; background: #181913; display: flex; align-items: center; justify-content: center; }
.tab { width: 348px; margin-left: 9px; height: 51px; border-radius: 14px 14px 0 0; background: #3c3c3c; display: flex; align-items: center; padding: 0 17px 8px 14px; position: relative; }
.tab::before, .tab::after { content: ""; position: absolute; bottom: 0; width: 14px; height: 14px; }
.tab::before { left: -14px; background: radial-gradient(circle at 0 0, transparent 14px, #3c3c3c 14.500px); }
.tab::after { right: -14px; background: radial-gradient(circle at 100% 0, transparent 14px, #3c3c3c 14.500px); }
.tab-title { flex: 1; margin-left: 14px; font-size: 17px; letter-spacing: -.1px; white-space: nowrap; padding-top: 1px; }
.newtab { width: 42px; height: 42px; margin-left: 9px; border-radius: 50%; background: #656565; display: flex; align-items: center; justify-content: center; }
.winctl { margin-left: auto; display: flex; gap: 53px; padding: 12px 16px 0 0; }

.toolbar { height: 71px; background: #3c3c3c; border-bottom: 1px solid #333; display: flex; align-items: center; padding: 0 30px 0 23px; }
.nav { display: flex; gap: 34px; width: 157px; }
.omnibox { width: 1533px; height: 51px; border-radius: 26px; background: #2f2f2a; display: flex; align-items: center; padding: 0 24px 0 8px; margin-top: -1px; }
.siteinfo { width: 36px; height: 36px; border-radius: 50%; background: #181913; display: flex; align-items: center; justify-content: center; }
.url { flex: 1; font-size: 20px; margin-left: 12px; letter-spacing: -.4px; }
.url i { font-style: normal; color: #9a9a96; }
.ext { margin-left: 28px; }
.sep { width: 3px; height: 24px; background: #666; border-radius: 2px; margin: 0 24px; }
.avatar { margin-right: auto; }

.viewport { height: 877px; display: flex; overflow: hidden; }
.page { width: 1897px; height: 877px; overflow: hidden; position: relative; padding: 0 36px; background: radial-gradient(ellipse 1500px 1250px at 0 25%, #081329 0%, #060b18 50%, #04050a 100%); }
.scrollbar { width: 23px; background: #2c2c2c; display: flex; flex-direction: column; align-items: center; padding-top: 6px; }
.thumb { width: 12px; height: 247px; border-radius: 6px; background: #9f9f9f; margin-top: 496px; }
.topshade { position: absolute; left: 0; top: 0; width: 100%; height: 21px; background: linear-gradient(90deg, rgba(0,0,0,.62), rgba(0,0,0,.3)); z-index: 0; }
.charts { display: flex; gap: 24px; height: 63px; }
.card { width: 901px; border: 1px solid #2f343e; box-shadow: 0 8px 24px rgba(0,0,0,.35); }
.chart-card { height: 63px; border-top: 0; border-radius: 0 0 24px 24px; padding: 0 21px; position: relative; background: linear-gradient(110deg, #1a2030 0%, #171b22 100%); }
.chart-card + .chart-card { width: 900px; background: linear-gradient(100deg, #181c26 0%, #14161a 40%); }
.chart { position: relative; z-index: 1; }
.plot-label { font: 20px "Open Sans", sans-serif; fill: #444; }
.plot-label .axis { font-size: 22px; }

.map-card { margin-top: 24px; height: 850px; border-radius: 24px; padding: 21px; background: linear-gradient(155deg, #1a2030 0%, #181c25 45%, #14161a 100%); }
.card-head { display: flex; justify-content: space-between; height: 47px; }
h2 { margin: 0; display: flex; align-items: center; gap: 12px; padding: 2px 0 0 5px; font: 700 28.500px "Inter", sans-serif; letter-spacing: -.2px; color: #e6ebf2; }
.actions { display: flex; gap: 12px; }
button { height: 47px; border: 1px solid #303541; border-radius: 15px; background: #20242f; color: #e6ebf2; font: 700 20px "Liberation Sans", sans-serif; display: flex; align-items: center; gap: 8.500px; padding: 3px 12px 0 17px; }
.desc { margin: 12px 0 17px; font: 19.500px/27.500px "Inter", sans-serif; color: #94a6bc; white-space: normal; }
.map { position: relative; width: 857px; height: 600px; border-radius: 16px; overflow: hidden; }
.tiles { width: 857px; height: 600px; }
.place { font: 48px "Noto Sans", sans-serif; fill: #333; stroke: #fff; stroke-opacity: .75; stroke-width: 9px; paint-order: stroke; stroke-linejoin: round; text-anchor: middle; }
.place .city { font-size: 65px; }
.place .region { font-size: 44px; fill: #8d6b9d; }
.zoomctl { position: absolute; left: 18px; top: 18px; width: 45px; height: 90px; background: #fff; border-radius: 5px; box-shadow: 0 1px 5px rgba(0,0,0,.6); color: #000; font: 700 33px/51px "Liberation Mono", monospace; text-align: center; padding-left: 1px; }
.zoomctl span { display: block; height: 45px; }
.zoomctl span:first-child { border-bottom: 1px solid #ccc; }
.zoomctl span + span { line-height: 54px; }
.map-pill { position: absolute; right: 9px; top: 9px; width: 246px; height: 47px; border: 1px solid rgba(255,255,255,.12); border-radius: 24px; background: rgba(255,255,255,.03); color: rgba(238,243,250,.82); font: 18px/45px "Liberation Sans", sans-serif; text-align: center; }
.attrib { position: absolute; right: 0; bottom: 0; height: 25px; background: rgba(255,255,255,.82); display: flex; align-items: center; padding: 0 3px 0 8px; }
.attrib span { background: #3066d1; height: 25px; padding: 0 5px; font: 18px/25px "Liberation Sans", sans-serif; white-space: nowrap; }
.assistant { position: absolute; right: 0; bottom: 0; width: 60px; height: 28px; background: #fff; border-radius: 28px 0 0 0; padding: 13px 0 0 15px; overflow: hidden; }

.taskbar { height: 72px; background: #1c1c1c; border-top: 2px solid #424242; display: flex; align-items: center; padding-bottom: 2px; }
.weather { width: 284px; padding: 6px 0 0 28px; margin-right: 30px; position: relative; }
.weather b { position: absolute; left: 46px; top: -7px; width: 24px; height: 24px; border-radius: 50%; background: #ff98a1; color: #221; font: 17px/24px "Noto Sans", sans-serif; text-align: center; }
.search { width: 330px; height: 48px; margin-left: 20px; border-radius: 24px; border: 1px solid #4c4c4c; border-top: 2px solid #606060; background: #3a3a3a; display: flex; align-items: center; padding: 0 30px 0 16px; }
.search span { flex: 1; margin-left: 15px; font-size: 20px; color: #d0d0d0; letter-spacing: -.4px; }
.apps { display: flex; margin-left: 3px; }
.app { width: 66px; height: 68px; display: flex; align-items: center; justify-content: center; position: relative; }
.app.run::after { content: ""; position: absolute; bottom: 4px; width: 9px; height: 5px; border-radius: 3px; background: #999; }
.app.active { width: 60px; margin: 4px 3px 5px; height: 59px; background: #2d2d2d; border: 1px solid #393939; border-radius: 6px; padding-bottom: 8px; }
.app.active::after { content: ""; position: absolute; bottom: 0; width: 24px; height: 5px; border-radius: 3px; background: #4cc2ff; }
.app.photos { width: 54px; margin: 4px 0 5px 3px; height: 59px; border-radius: 6px; background: #87454e; border: 1px solid #a0616a; box-shadow: 5px 0 0 -1px #1c1c1c, 6px 0 0 #87454e; padding-left: 6px; }
.app.photos::after { content: ""; position: absolute; bottom: 0; width: 34px; height: 5px; border-radius: 3px; background: #ff98a1; }
.tray { margin-left: auto; display: flex; align-items: center; padding-right: 31px; }
.lang, .clock { font-size: 17.500px; line-height: 23px; }
.lang { margin-left: 31px; text-align: center; letter-spacing: -.4px; }
.status { display: flex; gap: 12px; align-items: center; margin-left: 27px; }
.clock { margin: 0 13px 0 26px; text-align: right; }
```
